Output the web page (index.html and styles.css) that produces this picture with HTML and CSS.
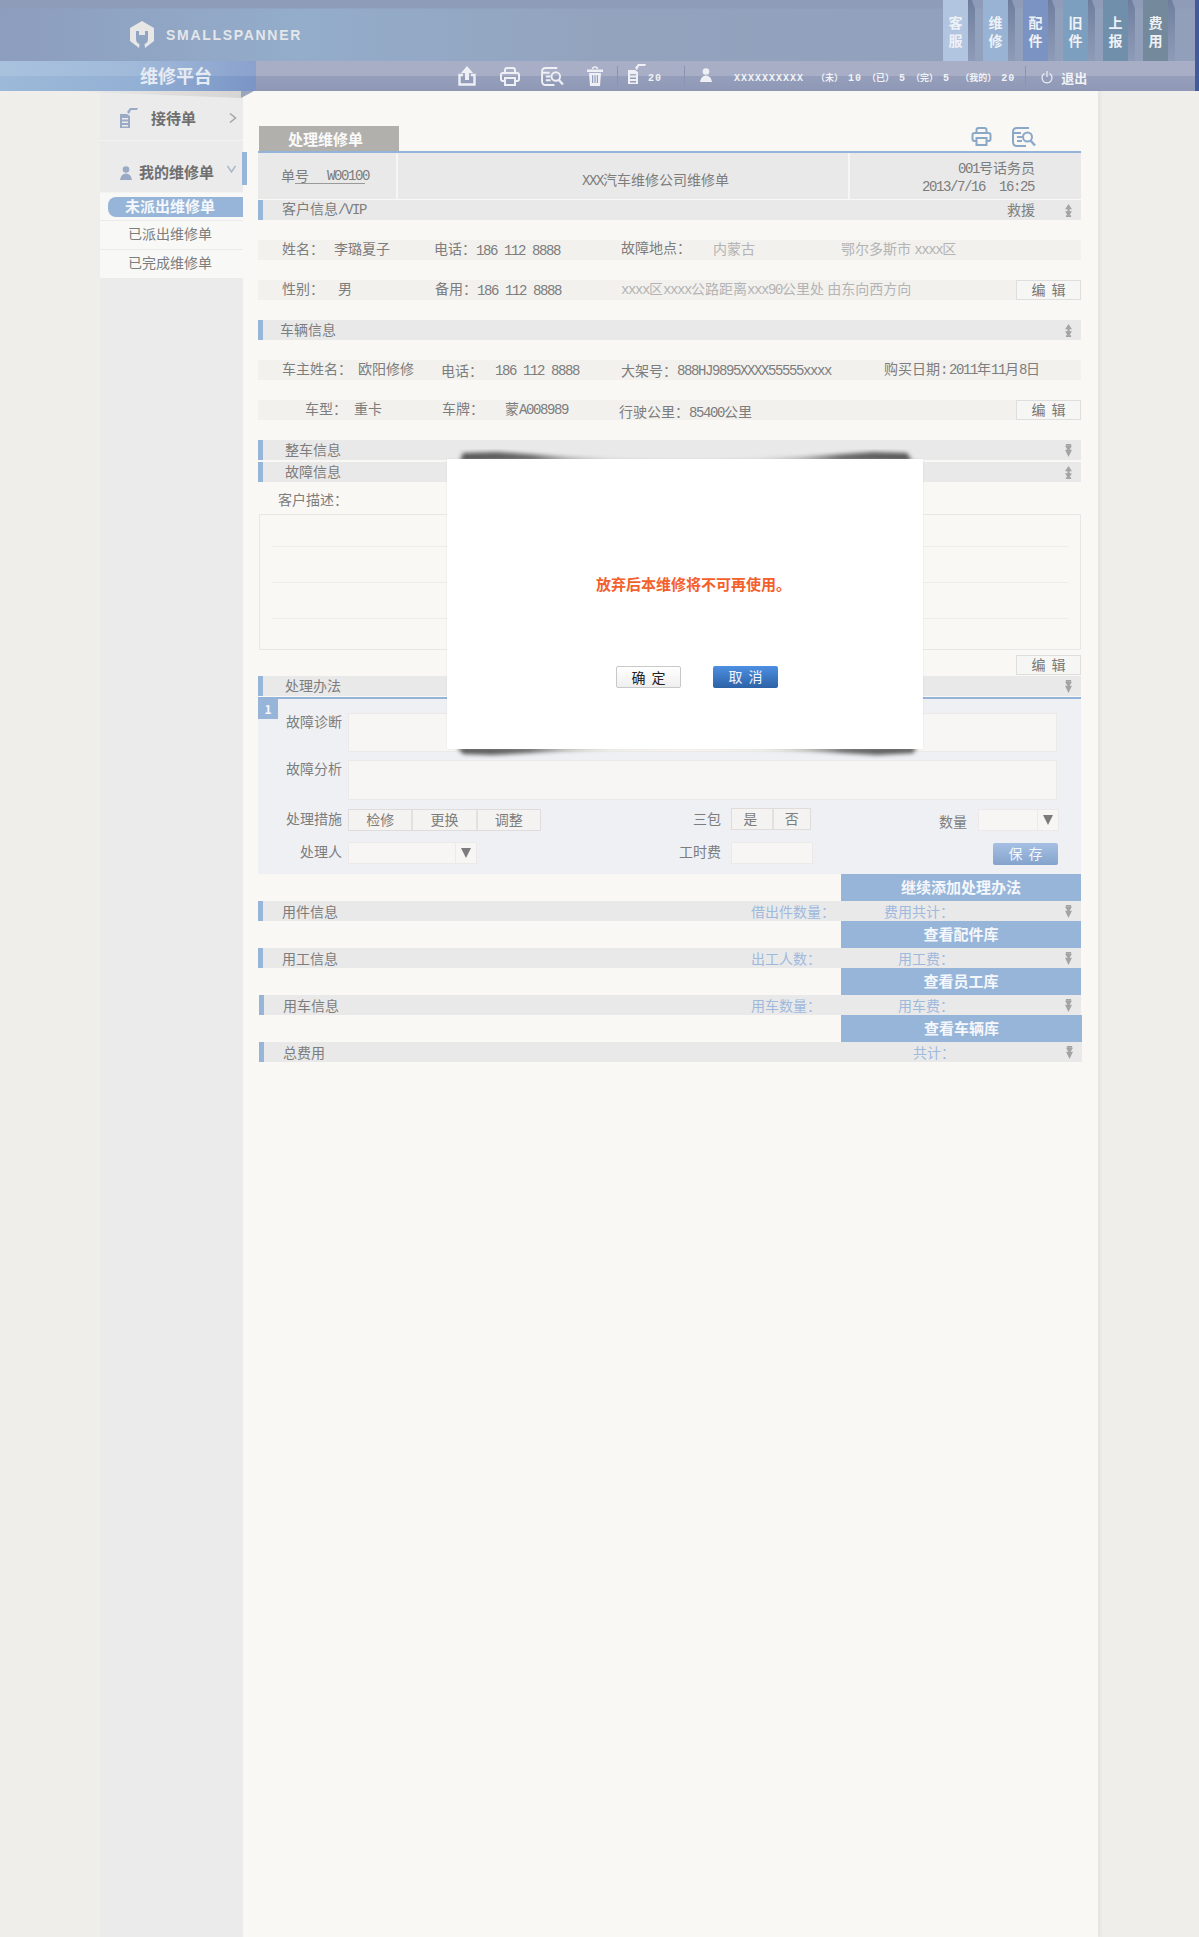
FILE: index.html
```html
<!DOCTYPE html>
<html lang="zh-CN">
<head>
    <meta charset="UTF-8">
    <title>维修平台</title>
    <link rel="stylesheet" href="styles.css">
</head>
<body>
    <svg class="sprite" width="0" height="0">
        <symbol id="i-up" viewBox="0 0 8 15"><path d="M4 0 8 6H5.200V8.500H8L4 15 0 8.500H2.800V6H0z"/><path d="M1 15H7V13H1z"/></symbol>
        <symbol id="i-down" viewBox="0 0 8 15"><path d="M1 0H7V2H1z"/><path d="M0 2H8L5.200 6.500H8L4 15 0 6.500H2.800z"/></symbol>
        <symbol id="i-print" viewBox="0 0 20 19"><path d="M5 6V3Q5 1 7 1H13Q15 1 15 3V6M5 14H3Q1 14 1 12V8Q1 6 3 6H17Q19 6 19 8V12Q19 14 17 14H15M5 11H15V18H5Z" fill="none" stroke="currentColor" stroke-width="2"/></symbol>
        <symbol id="i-preview" viewBox="0 0 24 20"><path d="M17 1H5Q1 1 1 5V15Q1 19 5 19H14M1 6H9M5 10H10M5 14H10" fill="none" stroke="currentColor" stroke-width="2"/><circle cx="15.500" cy="10" r="4.500" fill="none" stroke="currentColor" stroke-width="2"/><path d="M18.500 13.500 23 18.500" stroke="currentColor" stroke-width="2.400"/></symbol>
    </svg>

    <div class="header">
        <div class="topbar">
            <div class="logo">
                <svg class="logo-mark" viewBox="0 0 26 28"><path d="M13 0 25 7V20L16 27 15.500 23Q19 22 19 18V10H16V14H10V10H7V18Q7 22 10.500 23L10 27 1 20V7Z" fill="#e7e7e6"/></svg>
                <span class="logo-text">SMALLSPANNER</span>
            </div>
            <div class="topnav">
                <a class="topnav-tab tab-kefu">客<br>服</a>
                <a class="topnav-tab tab-weixiu">维<br>修</a>
                <a class="topnav-tab tab-peijian">配<br>件</a>
                <a class="topnav-tab tab-jiujian">旧<br>件</a>
                <a class="topnav-tab tab-shangbao">上<br>报</a>
                <a class="topnav-tab tab-feiyong">费<br>用</a>
            </div>
        </div>
        <div class="subbar">
            <div class="platform">维修平台</div>
            <svg class="tool tool-upload" viewBox="0 0 18 20"><path d="M9 0 15 7H11V14H7V7H3Z" fill="currentColor"/><path d="M5 9H1.500V18.500H16.500V9H13" fill="none" stroke="currentColor" stroke-width="2.400"/></svg>
            <svg class="tool tool-print"><use href="#i-print"/></svg>
            <svg class="tool tool-preview"><use href="#i-preview"/></svg>
            <svg class="tool tool-trash" viewBox="0 0 16 20"><path d="M5.500 3Q5.500 1 8 1T10.500 3" fill="none" stroke="currentColor" stroke-width="1.400"/><path d="M0 3.500H16V6H0Z" fill="currentColor"/><path d="M2 7H14L13 20H3ZM5 9V17H6.200V9ZM7.400 9V17H8.600V9ZM9.800 9V17H11V9Z" fill="currentColor" fill-rule="evenodd"/></svg>
            <span class="divider divider-a"></span>
            <svg class="tool tool-list" viewBox="0 0 19 22"><path d="M8 5 11 1H19L18 3H12L10 7Z" fill="currentColor"/><path d="M1 7H8L11 9V21H1ZM3 11V12.500H9V11ZM3 14.500V16H9V14.500ZM3 18V19.500H9V18Z" fill="currentColor" fill-rule="evenodd"/></svg>
            <span class="bar-num tool-count">20</span>
            <span class="divider divider-b"></span>
            <svg class="tool tool-user" viewBox="0 0 12 14"><circle cx="6" cy="3.500" r="3.300" fill="currentColor"/><path d="M0 14Q1 7.500 6 7.500T12 14Z" fill="currentColor"/></svg>
            <span class="bar-num user-name">XXXXXXXXXX</span>
            <div class="counts">
                <span class="bar-cjk">（未）</span><span class="bar-num">10</span>
                <span class="bar-cjk">（已）</span><span class="bar-num">5</span>
                <span class="bar-cjk">（完）</span><span class="bar-num">5</span>
                <span class="bar-cjk count-mine">（我的）</span><span class="bar-num">20</span>
            </div>
            <span class="divider divider-c"></span>
            <svg class="tool tool-power" viewBox="0 0 12 13"><path d="M3.500 2.500A5 5 0 1 0 8.500 2.500M6 0V6" fill="none" stroke="currentColor" stroke-width="1.200"/></svg>
            <span class="logout">退出</span>
        </div>
    </div>

    <div class="layout">
        <div class="sidebar">
            <div class="side-head side-reception">
                <svg class="side-icon" viewBox="0 0 19 22"><path d="M8 5 11 1H19L18 3H12L10 7Z" fill="#9aa9c4"/><path d="M1 7H8L11 9V21H1ZM3 11V12.500H9V11ZM3 14.500V16H9V14.500ZM3 18V19.500H9V18Z" fill="#9aa9c4" fill-rule="evenodd"/></svg>
                <span class="side-title">接待单</span>
                <svg class="side-chevron" viewBox="0 0 8 10"><path d="M1 0.500 6.500 5 1 9.500" fill="none" stroke="#a5a5a5" stroke-width="1.500"/></svg>
            </div>
            <div class="side-head side-mine">
                <svg class="side-user" viewBox="0 0 12 14"><circle cx="6" cy="3.500" r="3.300" fill="#9aa9c4"/><path d="M0 14Q1 7.500 6 7.500T12 14Z" fill="#9aa9c4"/></svg>
                <span class="side-title">我的维修单</span>
                <svg class="side-chevron-down" viewBox="0 0 9 8"><path d="M0.500 1 4.500 7 8.500 1" fill="none" stroke="#a9b4c6" stroke-width="1.400"/></svg>
            </div>
            <ul class="side-list">
                <li class="side-item active"><span>未派出维修单</span></li>
                <li class="side-item"><span>已派出维修单</span></li>
                <li class="side-item"><span>已完成维修单</span></li>
            </ul>
        </div>

        <div class="main">
            <div class="tabbar">
                <div class="tab-current">处理维修单</div>
                <div class="tab-tools">
                    <svg class="tab-print"><use href="#i-print"/></svg>
                    <svg class="tab-preview"><use href="#i-preview"/></svg>
                </div>
            </div>

            <div class="bill-head">
                <div class="bill-left"><span>单号</span><span class="bill-no"><span class="num">W00100</span></span></div>
                <div class="bill-center"><span class="num">XXX</span>汽车维修公司维修单</div>
                <div class="bill-right">
                    <div><span class="num">001</span>号话务员</div>
                    <div class="num bill-time">2013/7/16  16:25</div>
                </div>
            </div>

            <div class="section raise">
                <span class="sec-title">客户信息<span class="num">/VIP</span></span>
                <span class="sec-note">救援</span>
                <svg class="sec-arrow"><use href="#i-up"/></svg>
            </div>
            <div class="row row-name">
                <span>姓名：</span><span>李璐夏子</span>
                <span>电话：</span><span class="num">186 112 8888</span>
                <span class="lift">故障地点：</span><span class="pale">内蒙古</span>
                <span class="pale">鄂尔多斯市 <span class="num">xxxx</span>区</span>
            </div>
            <div class="row row-gender">
                <span>性别：</span><span>男</span>
                <span>备用：</span><span class="num">186 112 8888</span>
                <span class="pale"><span class="num">xxxx</span>区<span class="num">xxxx</span>公路距离<span class="num">xxx90</span>公里处 由东向西方向</span>
                <a class="edit-btn">编 辑</a>
            </div>

            <div class="section raise">
                <span class="sec-title narrow">车辆信息</span>
                <svg class="sec-arrow"><use href="#i-up"/></svg>
            </div>
            <div class="row row-owner">
                <span>车主姓名：</span><span>欧阳修修</span>
                <span class="drop-s">电话：</span><span class="num">186 112 8888</span>
                <span class="drop-s">大架号：</span><span class="num">888HJ9895XXXX55555xxxx</span>
                <span>购买日期<span class="num">:</span></span><span><span class="num">2011</span>年<span class="num">11</span>月<span class="num">8</span>日</span>
            </div>
            <div class="row row-car">
                <span>车型：</span><span>重卡</span>
                <span>车牌：</span><span>蒙<span class="num">A008989</span></span>
                <span class="drop">行驶公里：</span><span class="drop"><span class="num">85400</span>公里</span>
                <a class="edit-btn">编 辑</a>
            </div>

            <div class="section raise">
                <span class="sec-title wide">整车信息</span>
                <svg class="sec-arrow"><use href="#i-down"/></svg>
            </div>
            <div class="section sec-close raise">
                <span class="sec-title wide">故障信息</span>
                <svg class="sec-arrow"><use href="#i-up"/></svg>
            </div>
            <div class="desc-label">客户描述：</div>
            <div class="desc-box">
                <div class="desc-line"></div>
                <div class="desc-line"></div>
                <div class="desc-line"></div>
            </div>
            <a class="edit-btn edit-desc">编 辑</a>

            <div class="section sec-plan raise">
                <span class="sec-title wide">处理办法</span>
                <svg class="sec-arrow"><use href="#i-down"/></svg>
            </div>
            <div class="plan">
                <span class="plan-badge">1</span>
                <div class="plan-row">
                    <label class="plan-label">故障诊断</label>
                    <div class="plan-area"></div>
                </div>
                <div class="plan-row plan-row-tall">
                    <label class="plan-label">故障分析</label>
                    <div class="plan-area"></div>
                </div>
                <div class="plan-row plan-row-form">
                    <label class="plan-label">处理措施</label>
                    <div class="seg seg-measure"><span>检修</span><span>更换</span><span>调整</span></div>
                    <label class="plan-label label-warranty">三包</label>
                    <div class="seg seg-warranty"><span>是</span><span>否</span></div>
                    <label class="plan-label label-qty">数量</label>
                    <div class="pick pick-qty"><span class="pick-value"></span><span class="pick-arrow"></span></div>
                </div>
                <div class="plan-row plan-row-person">
                    <label class="plan-label">处理人</label>
                    <div class="pick pick-person"><span class="pick-value"></span><span class="pick-arrow"></span></div>
                    <label class="plan-label label-fee">工时费</label>
                    <div class="plan-input"></div>
                    <a class="save-btn">保 存</a>
                </div>
            </div>

            <a class="add-bar">继续添加处理办法</a>
            <div class="section">
                <span class="sec-title">用件信息</span>
                <div class="sec-stats"><span>借出件数量：</span><span class="stat-total">费用共计：</span></div>
                <svg class="sec-arrow"><use href="#i-down"/></svg>
            </div>
            <a class="add-bar">查看配件库</a>
            <div class="section">
                <span class="sec-title">用工信息</span>
                <div class="sec-stats"><span>出工人数：</span><span class="stat-total">用工费：</span></div>
                <svg class="sec-arrow"><use href="#i-down"/></svg>
            </div>
            <a class="add-bar">查看员工库</a>
            <div class="section sec-shift">
                <span class="sec-title slim">用车信息</span>
                <div class="sec-stats"><span>用车数量：</span><span class="stat-total">用车费：</span></div>
                <svg class="sec-arrow"><use href="#i-down"/></svg>
            </div>
            <a class="add-bar add-bar-last">查看车辆库</a>
            <div class="section sec-shift sec-total">
                <span class="sec-title slim">总费用</span>
                <div class="sec-stats"><span class="stat-total">共计：</span></div>
                <svg class="sec-arrow"><use href="#i-down"/></svg>
            </div>
        </div>
    </div>

    <!-- confirm dialog -->
    <div class="modal">
        <svg class="modal-shade" viewBox="0 0 496 310">
            <defs>
                <filter id="soft" x="-10%" y="-100%" width="120%" height="300%"><feGaussianBlur stdDeviation="2"/></filter>
                <linearGradient id="fade">
                    <stop offset="0" stop-color="#555"/>
                    <stop offset="0.16" stop-color="#666"/>
                    <stop offset="0.34" stop-color="#ccc" stop-opacity="0.5"/>
                    <stop offset="0.66" stop-color="#ccc" stop-opacity="0.5"/>
                    <stop offset="0.84" stop-color="#666"/>
                    <stop offset="1" stop-color="#555"/>
                </linearGradient>
            </defs>
            <g fill="url(#fade)" filter="url(#soft)">
                <path d="M23 12 26 4 60 3 130 8 248 12 366 8 436 3 470 4 475 12Z"/>
                <path d="M20 298 480 298 476 304 440 306 370 302 248 298 126 302 56 306 26 305Z"/>
            </g>
        </svg>
        <div class="modal-box">
            <p class="modal-msg">放弃后本维修将不可再使用。</p>
            <div class="modal-btns">
                <a class="modal-btn btn-ok">确 定</a>
                <a class="modal-btn btn-cancel">取 消</a>
            </div>
        </div>
    </div>
</body>
</html>
```

FILE: styles.css
```css
/* Reset */
* {
    margin: 0;
    padding: 0;
    box-sizing: border-box;
}

body {
    position: relative;
    width: 1199px;
    background-color: #efeeeb;
    font-family: "Noto Sans CJK SC", "Liberation Sans", sans-serif;
    font-size: 14px;
    color: #7d7d7d;
    overflow-x: hidden;
}

a {
    text-decoration: none;
}

ul {
    list-style: none;
}

.sprite {
    position: absolute;
}

/* half width latin text, same advance as the old bitmap font */
.num {
    font-family: "Liberation Mono", monospace;
    font-size: 14px;
    letter-spacing: -1.4px;
    white-space: pre;
}

/* Header */
.header {
    border-right: 4px solid #3f5b9c;
}

.topbar {
    height: 61px;
    display: flex;
    align-items: flex-start;
    justify-content: space-between;
    padding-right: 27px;
    background: linear-gradient(180deg, #8e9cb9 0, #8e9cb9 8px, transparent 9px),
        linear-gradient(90deg, #8d9dbd 0, #93adca 300px, #93a3be 600px, #919fbb 100%);
}

.logo {
    display: flex;
    align-items: center;
    padding: 21px 0 0 129px;
}

.logo-mark {
    width: 26px;
    height: 28px;
}

.logo-text {
    margin-left: 11px;
    font-family: "Liberation Sans", sans-serif;
    font-size: 14px;
    font-weight: bold;
    letter-spacing: 1.7px;
    color: #e4e6ea;
}

.topnav {
    display: flex;
    gap: 15px;
}

.topnav-tab {
    position: relative;
    display: block;
    width: 25px;
    height: 61px;
    padding-top: 13px;
    text-align: center;
    font-size: 14px;
    font-weight: bold;
    line-height: 18px;
    color: #eef1f6;
}

.topnav-tab::after {
    content: "";
    position: absolute;
    left: 25px;
    top: 0;
    width: 7px;
    height: 100%;
    background: linear-gradient(180deg, #6f7e9e, #8f9cb8);
    clip-path: polygon(0 0, 55% 0, 100% 14%, 100% 100%, 0 100%);
}

.tab-kefu { background-color: #b1c5e1; }
.tab-weixiu { background-color: #98b3d4; }
.tab-peijian { background-color: #7b93c3; }
.tab-jiujian { background-color: #7c9fbf; }
.tab-shangbao { background-color: #6f8faa; }
.tab-feiyong { background-color: #748a9c; }

.subbar {
    height: 30px;
    display: flex;
    align-items: center;
    color: #eef0f5;
    background: linear-gradient(180deg, #a7aec6 0, #a7aec6 50%, #959eba 50%, #8f99b7 100%);
}

.platform {
    position: relative;
    align-self: stretch;
    width: 256px;
    padding-left: 140px;
    font-size: 18px;
    font-weight: bold;
    line-height: 29px;
    color: #e6ebf3;
    background: linear-gradient(180deg, rgba(255, 255, 255, 0.12) 0, rgba(255, 255, 255, 0.12) 50%, transparent 50%),
        linear-gradient(90deg, #9cb9d9 0, #94b1d5 130px, #7a95c6 100%);
}

/* folded ribbon under the title */
.platform::after {
    content: "";
    position: absolute;
    top: 100%;
    left: 60px;
    width: 181px;
    height: 7px;
    background: linear-gradient(90deg, transparent, #d6d5d3);
    clip-path: polygon(0 0, 100% 0, 100% 100%);
}

.platform::before {
    content: "";
    position: absolute;
    top: 100%;
    left: 241px;
    width: 13px;
    height: 7px;
    background-color: #9aa6bc;
    clip-path: polygon(0 0, 100% 0, 0 100%);
}

.tool {
    flex-shrink: 0;
}

.tool-upload { width: 18px; height: 20px; margin-left: 202px; }
.tool-print { width: 20px; height: 19px; margin-left: 24px; }
.tool-preview { width: 23px; height: 19px; margin-left: 21px; }
.tool-trash { width: 16px; height: 20px; margin-left: 23px; }
.tool-list { width: 19px; height: 22px; margin-left: 9px; margin-top: -4px; }
.tool-user { width: 12px; height: 14px; margin-left: 15px; margin-top: -2px; }
.tool-power { width: 12px; height: 13px; margin-left: 15px; margin-top: 2px; }

.divider {
    width: 1px;
    height: 20px;
    background-color: #8a93b0;
}

.divider-a { margin-left: 14px; }
.divider-b { margin-left: 22px; }
.divider-c { margin-left: 10px; }

.bar-num {
    margin-top: 4px;
    font-family: "Liberation Mono", monospace;
    font-size: 10px;
    font-weight: bold;
    letter-spacing: 1px;
    color: #f0f2f6;
}

.bar-cjk {
    margin-top: 4px;
    font-size: 9px;
    font-weight: bold;
    line-height: 12px;
    color: #f0f2f6;
}

.tool-count { margin-left: 2px; }
.user-name { margin-left: 22px; }

.counts {
    display: flex;
    align-items: center;
    gap: 5px;
    margin-left: 12px;
}

.count-mine { margin-left: 5px; }

.logout {
    margin-left: 8px;
    margin-top: 2px;
    font-size: 13px;
    font-weight: bold;
    color: #f0f2f6;
}

/* Page columns */
.layout {
    display: flex;
    min-height: 1846px;
    margin-left: 100px;
}

.sidebar {
    width: 143px;
    background-color: #ecebec;
    box-shadow: -1px 0 0 #eeedec;
}

.side-head {
    position: relative;
    display: flex;
    border-bottom: 1px solid #f3f3f2;
    font-weight: bold;
}

.side-reception {
    height: 50px;
    align-items: center;
    padding: 5px 0 0 19px;
}

.side-mine {
    height: 52px;
    align-items: flex-end;
    padding: 0 0 10px 20px;
}

.side-mine::after {
    content: "";
    position: absolute;
    left: 142px;
    top: 11px;
    width: 5px;
    height: 33px;
    background-color: #97b5d9;
}

.side-icon {
    width: 19px;
    height: 22px;
}

.side-user {
    width: 12px;
    height: 14px;
    margin-bottom: 2px;
}

.side-title {
    font-size: 15px;
    line-height: 20px;
    color: #6f6f6f;
}

.side-reception .side-title { margin-left: 13px; }
.side-mine .side-title { margin-left: 7px; }

.side-chevron {
    width: 8px;
    height: 10px;
    margin-left: 33px;
}

.side-chevron-down {
    width: 9px;
    height: 8px;
    margin: 0 0 9px 13px;
}

.side-item {
    height: 29px;
    padding-left: 28px;
    line-height: 25px;
    background-color: #f8f8f6;
    border-bottom: 1px solid #ecebe9;
}

.side-item.active {
    height: 28px;
    padding: 4px 0 4px 8px;
}

.side-item.active span {
    display: block;
    height: 20px;
    padding-left: 17px;
    border-radius: 8px 0 0 8px;
    background-color: #97b5d9;
    font-size: 15px;
    font-weight: bold;
    line-height: 18px;
    color: #f4f7fb;
}

/* Main panel */
.main {
    width: 855px;
    padding: 35px 17px 0 15px;
    background-color: #f9f8f5;
    box-shadow: 3px 0 3px rgba(0, 0, 0, 0.04);
}

.tabbar {
    display: flex;
    height: 27px;
    border-bottom: 2px solid #93b3d9;
}

.tab-current {
    width: 140px;
    height: 25px;
    margin-left: 1px;
    padding-left: 29px;
    background-color: #b1b0ad;
    font-size: 15px;
    font-weight: bold;
    line-height: 25px;
    color: #fafafa;
}

.tab-tools {
    display: flex;
    gap: 20px;
    margin-left: auto;
    margin-right: 45px;
    padding-top: 1px;
    color: #8aa9c9;
}

.tab-print { width: 21px; height: 19px; }
.tab-preview { width: 24px; height: 20px; }

.bill-head {
    display: flex;
    height: 46px;
    margin-bottom: 1px;
    background-color: #e9e9e9;
    line-height: 18px;
}

.bill-left {
    display: flex;
    width: 140px;
    padding: 13px 0 0 23px;
    border-right: 2px solid #f6f6f5;
}

.bill-no {
    width: 70px;
    height: 18px;
    margin-left: -14px;
    padding-left: 32px;
    line-height: 17px;
    border-bottom: 1px solid #9a9a9a;
}

.bill-center {
    width: 452px;
    padding: 17px 0 0 184px;
    border-right: 2px solid #f6f6f5;
}

.bill-right {
    flex: 1;
    padding: 5px 46px 0 0;
    text-align: right;
    line-height: 18px;
}

.bill-time {
    display: block;
    padding-right: 1px;
}

.section {
    display: flex;
    align-items: center;
    height: 20px;
    border-left: 5px solid #97b5d9;
    background-color: #e9e9e9;
}

.sec-close {
    margin-top: 2px;
}

.sec-shift {
    margin-left: 1px;
}

.sec-total {
    margin-right: -1px;
}

.sec-title {
    margin-left: 19px;
    line-height: 20px;
}

.sec-title.narrow { margin-left: 17px; }
.sec-title.wide { margin-left: 22px; }
.sec-title.slim { margin-left: 19px; }

.raise .sec-title,
.raise .sec-note {
    margin-bottom: 3px;
}

.sec-note {
    margin-left: auto;
    margin-right: 30px;
    line-height: 20px;
}

.sec-arrow {
    width: 7px;
    height: 13px;
    margin-right: 9px;
    fill: #a3a3a3;
}

.section > .sec-title + .sec-arrow {
    margin-left: auto;
}

.sec-stats {
    display: flex;
    width: 314px;
    margin-left: auto;
    color: #9fb9dd;
}

.stat-total {
    margin-left: auto;
    margin-right: 111px;
}

/* Info rows */
.row {
    display: grid;
    align-items: start;
    height: 20px;
    margin: 20px 0;
    padding-left: 24px;
    background-color: #f2f1ee;
    line-height: 16px;
    white-space: nowrap;
}

.row > .num {
    margin-top: 3px;
}

.row-name { grid-template-columns: 52px 100px 42px 145px 92px 128px auto; }
.row-gender { grid-template-columns: 56px 97px 42px 144px 395px 65px; }
.row-owner { grid-template-columns: 76px 83px 54px 126px 56px 207px 65px auto; }
.row-car {
    grid-template-columns: 49px 88px 63px 114px 70px 327px 65px;
    padding-left: 47px;
}

.lift { margin-top: -1px; }
.drop { margin-top: 3px; }
.drop-s { margin-top: 2px; }

.pale {
    color: #b4b4b4;
}

.edit-btn {
    display: block;
    height: 20px;
    border: 1px solid #dedede;
    background-color: #f6f6f4;
    text-align: center;
    line-height: 16px;
    word-spacing: 3px;
    color: #777;
}

.desc-label {
    height: 32px;
    padding: 9px 0 0 20px;
    line-height: 16px;
}

.desc-box {
    height: 136px;
    padding: 0 12px;
    border: 1px solid #e8e7e5;
    margin-left: 1px;
}

.desc-line {
    height: 36px;
    border-bottom: 1px solid #eeedeb;
}

.desc-line:first-child {
    height: 32px;
}

.edit-desc {
    width: 65px;
    margin: 5px 0 1px auto;
}

.sec-plan {
    margin-bottom: 1px;
}

/* Repair plan form */
.plan {
    position: relative;
    height: 177px;
    padding-top: 14px;
    border-top: 2px solid #93b3d9;
    background-color: #eff0f4;
}

.plan-badge {
    position: absolute;
    left: 0;
    top: 0;
    width: 20px;
    height: 20px;
    background-color: #97b5d9;
    text-align: center;
    font-size: 12px;
    font-weight: bold;
    line-height: 20px;
    color: #f4f7fb;
}

.plan-row {
    display: flex;
    align-items: flex-start;
    height: 39px;
}

.plan-row-tall {
    height: 40px;
    margin-top: 8px;
}

.plan-row-form {
    height: 22px;
    margin-top: 9px;
}

.plan-row-person {
    height: 22px;
    margin-top: 11px;
}

.plan-label {
    flex-shrink: 0;
    width: 84px;
    margin-right: 6px;
    text-align: right;
    line-height: 16px;
}

.plan-row-form .plan-label,
.plan-row-person .plan-label {
    line-height: 18px;
}

.plan-area {
    width: 709px;
    height: 100%;
    border: 1px solid #ebeae8;
    background-color: #f7f6f4;
}

.seg {
    display: flex;
    height: 22px;
    border: 1px solid #dedddb;
    background-color: #f4f3f1;
    line-height: 18px;
    text-align: center;
}

.seg span + span {
    border-left: 2px solid #e2e1df;
}

.seg-measure { width: 193px; }
.seg-measure span { flex: 1; }

.seg-warranty {
    width: 80px;
    margin-top: -1px;
}

.seg-warranty span { flex: 1; }
.seg-warranty span:first-child { padding-right: 3px; }

.label-warranty {
    width: 70px;
    margin-left: 110px;
    margin-right: 10px;
}

.label-qty {
    width: 40px;
    margin-left: 116px;
    margin-right: 11px;
    padding-top: 3px;
}

.pick {
    display: flex;
    height: 22px;
    border: 1px solid #ebeae8;
    background-color: #f7f6f4;
}

.pick-qty { width: 81px; }
.pick-person { width: 129px; }

.pick-value {
    flex: 1;
}

.pick-arrow {
    position: relative;
    width: 21px;
    border-left: 1px solid #ebeae8;
}

.pick-arrow::after {
    content: "";
    position: absolute;
    left: 5px;
    top: 5px;
    border-left: 5px solid transparent;
    border-right: 5px solid transparent;
    border-top: 10px solid #7c7c7c;
}

.label-fee {
    width: 70px;
    margin-left: 174px;
    margin-right: 10px;
}

.plan-input {
    width: 82px;
    height: 22px;
    border: 1px solid #ebeae8;
    background-color: #f7f6f4;
}

.save-btn {
    width: 65px;
    height: 22px;
    margin-left: 180px;
    margin-top: 1px;
    border-radius: 2px;
    background: linear-gradient(180deg, #a6c0e3, #84a3cc);
    text-align: center;
    line-height: 21px;
    word-spacing: 3px;
    color: #f4f7fb;
}

.add-bar {
    display: block;
    width: 240px;
    height: 27px;
    margin-left: auto;
    background-color: #97b5d9;
    text-align: center;
    font-size: 15px;
    font-weight: bold;
    line-height: 26px;
    color: #f4f7fb;
}

.add-bar-last {
    width: 241px;
    margin-right: -1px;
}

/* Dialog */
.modal {
    position: absolute;
    left: 447px;
    top: 459px;
    width: 476px;
    height: 290px;
}

.modal-shade {
    position: absolute;
    left: -10px;
    top: -10px;
    width: 496px;
    height: 310px;
}

.modal-box {
    position: relative;
    display: flex;
    flex-direction: column;
    align-items: center;
    height: 100%;
    padding: 118px 0 0 24px;
    background-color: #fff;
    box-shadow: 0 0 2px rgba(0, 0, 0, 0.08);
}

.modal-msg {
    margin-right: 7px;
    font-size: 15px;
    font-weight: bold;
    line-height: 14px;
    color: #f4602c;
}

.modal-btns {
    display: flex;
    gap: 32px;
    margin-top: 75px;
}

.modal-btn {
    display: block;
    width: 65px;
    height: 22px;
    border-radius: 2px;
    text-align: center;
    line-height: 20px;
    word-spacing: 3px;
}

.btn-ok {
    border: 1px solid #c8c8c8;
    background: linear-gradient(180deg, #fff, #efefef);
    color: #222;
}

.btn-cancel {
    background: linear-gradient(180deg, #4d8fe2, #2c62a6);
    color: #f2f6fc;
}
```
